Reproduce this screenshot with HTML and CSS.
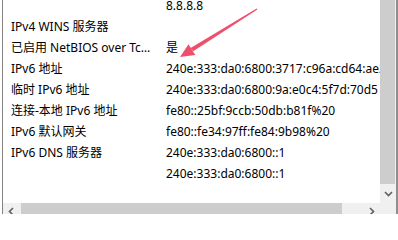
FILE: index.html
```html
<!DOCTYPE html>
<html lang="zh-CN">
<head>
<meta charset="utf-8">
<link rel="stylesheet" href="styles.css">
</head>
<body>
<div class="frame">
  <div class="main">
    <div class="viewport">
      <div class="list">
        <div class="row"><div class="label"></div><div class="value">8.8.8.8</div></div>
        <div class="row"><div class="label">IPv4 WINS 服务器</div><div class="value"></div></div>
        <div class="row"><div class="label">已启用 NetBIOS over Tcpip</div><div class="value">是</div></div>
        <div class="row"><div class="label">IPv6 地址</div><div class="value">240e:333:da0:6800:3717:c96a:cd64:ae21</div></div>
        <div class="row"><div class="label">临时 IPv6 地址</div><div class="value">240e:333:da0:6800:9a:e0c4:5f7d:70d5</div></div>
        <div class="row"><div class="label">连接-本地 IPv6 地址</div><div class="value">fe80::25bf:9ccb:50db:b81f%20</div></div>
        <div class="row"><div class="label">IPv6 默认网关</div><div class="value">fe80::fe34:97ff:fe84:9b98%20</div></div>
        <div class="row"><div class="label">IPv6 DNS 服务器</div><div class="value">240e:333:da0:6800::1</div></div>
        <div class="row"><div class="label"></div><div class="value">240e:333:da0:6800::1</div></div>
      </div>
    </div>
    <div class="vscroll">
      <div class="vthumb"></div>
      <div class="vbtn"><svg width="9" height="6" viewBox="0 0 9 6"><path d="M1 1 L4.5 4.5 L8 1" fill="none" stroke="#606060" stroke-width="1.6"/></svg></div>
    </div>
  </div>
  <div class="hbar">
    <div class="hbtn"><svg width="6" height="9" viewBox="0 0 6 9"><path d="M5 1 L1.5 4.5 L5 8" fill="none" stroke="#606060" stroke-width="1.6"/></svg></div>
    <div class="hthumb"></div>
    <div class="htrack"></div>
    <div class="hbtn"><svg width="6" height="9" viewBox="0 0 6 9"><path d="M1 1 L4.5 4.5 L1 8" fill="none" stroke="#606060" stroke-width="1.6"/></svg></div>
    <div class="corner"></div>
  </div>
</div>
<svg class="arrow" width="398" height="214" viewBox="0 0 398 214">
  <polygon points="257.4,9.5 256.6,8.5 190.6,47.9 193.2,51.3" fill="#ef4f6c"/>
  <polygon points="180,57 188.5,44.3 195.3,54.9" fill="#ef4f6c"/>
</svg>
</body>
</html>
```
FILE: styles.css
```css
html, body {
  margin: 0;
  padding: 0;
  background: #ffffff;
  width: 398px;
  height: 214px;
  overflow: hidden;
}
body {
  position: relative;
  font-family: "Noto Sans", "Noto Sans CJK SC", sans-serif;
  font-size: 12px;
  color: #000000;
}
.frame {
  margin-left: 2px;
  width: 393px;
  height: 220px;
  border-left: 1px solid #838383;
  border-right: 2px solid #8f8f8f;
  display: flex;
  flex-direction: column;
}
.main {
  display: flex;
  height: 203px;
}
.viewport {
  width: 377px;
  height: 203px;
  overflow: hidden;
  background: #ffffff;
}
.list {
  margin-top: -5px;
}
.row {
  display: grid;
  grid-template-columns: 155px 1fr;
  height: 21px;
  line-height: 21px;
  padding-left: 8px;
}
.label {
  white-space: nowrap;
  overflow: hidden;
  text-overflow: ellipsis;
  padding-right: 11px;
}
.value {
  white-space: nowrap;
  overflow: hidden;
}
.vscroll {
  width: 16px;
  background: #f0f0f0;
  display: flex;
  flex-direction: column;
}
.vthumb {
  width: 15px;
  height: 184px;
  background: #cdcdcd;
}
.vbtn {
  height: 19px;
  display: flex;
  align-items: center;
  justify-content: center;
}
.hbar {
  height: 17px;
  display: flex;
  background: #f0f0f0;
}
.hbtn {
  width: 17px;
  display: flex;
  align-items: center;
  justify-content: center;
}
.hthumb {
  width: 322px;
  margin-left: 1px;
  background: #cdcdcd;
}
.htrack {
  width: 21px;
}
.corner {
  width: 16px;
}
.arrow {
  position: absolute;
  left: 0;
  top: 0;
  pointer-events: none;
}
```
